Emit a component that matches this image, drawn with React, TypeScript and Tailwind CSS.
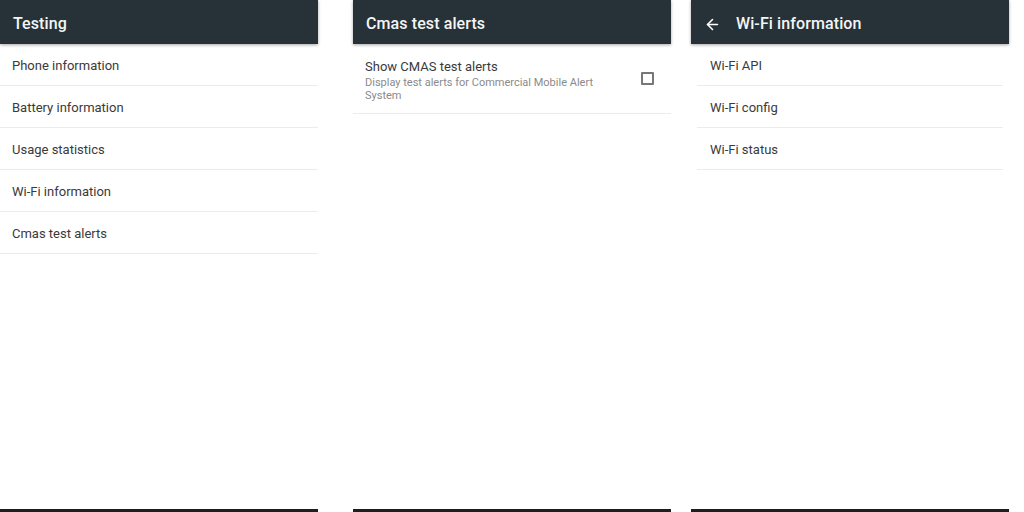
import { ArrowLeft } from 'lucide-react';

const font = { fontFamily: 'Roboto, "Noto Sans", sans-serif' };

function Header({ title, back }: { title: string; back?: boolean }) {
  return (
    <div className="h-[44px] bg-[#263238] flex items-center pt-[4px] px-[13px] shadow-[0_1px_3px_rgba(0,0,0,0.35)] relative z-10">
      {back && <ArrowLeft className="w-[17px] h-[17px] text-white mr-[15px] ml-[0px]" strokeWidth={2.3} />}
      <span className="text-[#f4f5f5] text-[16px] font-medium tracking-[0.1px]">{title}</span>
    </div>
  );
}

function Row({ label, inset }: { label: string; inset?: boolean }) {
  return (
    <div className={`h-[42px] flex items-center pt-[3px] border-b border-[#ececec] ${inset ? 'mx-[6px] px-[13px]' : 'px-[12px]'}`}>
      <span className="text-[13px] text-[#3a3a3a]">{label}</span>
    </div>
  );
}

function Panel({ children }: { children: React.ReactNode }) {
  return <div className="w-[318px] h-full flex flex-col bg-white">{children}<div className="flex-1" /><div className="h-[3px] bg-[#1e1e1e]" /></div>;
}

export default function App() {
  return (
    <div className="w-[1024px] h-[512px] bg-white flex overflow-hidden" style={font}>
      <Panel>
        <Header title="Testing" />
        {['Phone information', 'Battery information', 'Usage statistics', 'Wi-Fi information', 'Cmas test alerts'].map(l => (
          <Row key={l} label={l} />
        ))}
      </Panel>
      <div className="w-[35px]" />
      <Panel>
        <Header title="Cmas test alerts" />
        <div className="h-[70px] flex items-start border-b border-[#ececec] pl-[12px] pr-[17px] pt-[15px]">
          <div className="flex-1">
            <p className="text-[13px] text-[#3a3a3a] leading-[16px]">Show CMAS test alerts</p>
            <p className="text-[11px] text-[#8a8a8a] leading-[13px] mt-[1px] w-[240px]">Display test alerts for Commercial Mobile Alert System</p>
          </div>
          <div className="w-[13px] h-[13px] border-2 border-[#777] rounded-[1px] mt-[13px]" />
        </div>
      </Panel>
      <div className="w-[20px]" />
      <Panel>
        <Header title="Wi-Fi information" back />
        {['Wi-Fi API', 'Wi-Fi config', 'Wi-Fi status'].map(l => (
          <Row key={l} label={l} inset />
        ))}
      </Panel>
    </div>
  );
}
